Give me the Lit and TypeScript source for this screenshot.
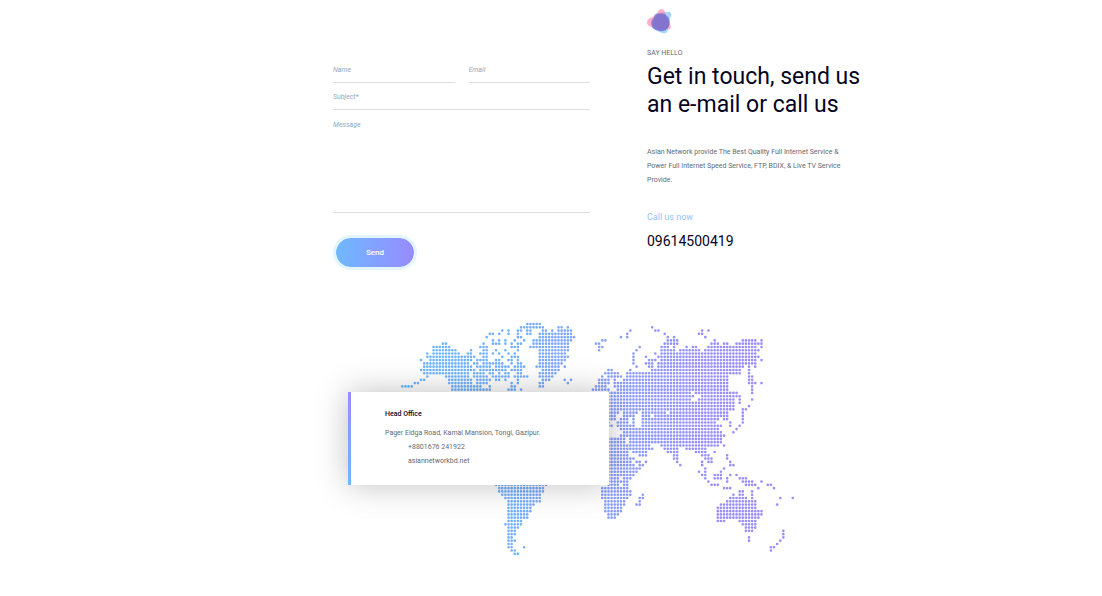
import { LitElement, html, css, svg } from "lit";
import { customElement } from "lit/decorators.js";

const PITCH_X = 9.37;
const PITCH_Y = 9.85;
const ORIGIN_X = 22;
const ORIGIN_Y = 27;

// One entry per row of dots: horizontal spans in map units, snapped to the dot grid.
const LAND: string[] = [
  "394-435",
  "375-445 487-497 517 769",
  "319 337 367-377 395-405 440 452 472 487-528 704 779-789 921 938",
  "283-295 311 337 370 395-405 430-528 696 808 911-921",
  "273 372-382 430-537 676 696 817 835 929",
  "293 312 329 356 386 415-528 623-633 815-847 958 1040-1080 1097",
  "143-152 263 293 303-311 329 347 367-377 415-520 600-610 808-847 948-967 985-993 1023-1097",
  "115-162 256-275 350-367 405-520 611-621 732 798-820 835 873 890-905 939-993 1003-1080 1097",
  "115-180 230 265-275 303 329 367 430-515 611 723 798-835 853-911 930-1080 1088",
  "95 115-190 217-228 256-275 293 312 338 356 430-508 713 779 798-1085",
  "95-190 200-238 265-275 319 347-367 430-518 713 752 788-1088",
  "78 105-228 246 256-275 302 311 337-347 367 430-508 713 761-779 798-1080 1097",
  "85-220 238-246 265-293 303-319 347 367-377 430-500 713 752-770 788-1080",
  "85-228 246-283 303-338 356-386 425-490 508 723 761-770 788-1040 1061 1080",
  "78-240 256-300 303-329 347-377 440-495 640-648 704 770-780 795-1038 1061",
  "85-220 240-265 283-293 312 329-338 367-377 430-480 630-665 696-1038 1061",
  "95 152-220 238-275 293-338 356-386 395 430-472 620 640-675 696-1000 1061-1071",
  "78-85 162-230 246-283 302-312 329 370 440-460 508 528 611-640 655 690-995 1061-1071",
  "58-68 162-230 246-275 347 370 435-445 518 620 611-645 655-665 680-995 1061-1080 1097",
  "22-49 168-255 283 347-360 430-445 605-635 655-670 680-995 1071",
  "168-280 338-356 377 595-630 645 665-675 685-995 1071",
  "645-690 700-885 905-1023 1071",
  "645-890 920-1023 1034",
  "645-885 911-1014 1034 1071",
  "645-890 902-1015 1033",
  "645-1015 1061",
  "645-1015 1040-1052",
  "645-665 685-725 745-805 825-995 1040",
  "645-655 685-715 745-765 785-995 1040",
  "645-655 680-697 715 745-965 985-995 1040",
  "645 672-697 715-720 740-960 1003 1040",
  "645-650 665-715 745-975 1003 1033",
  "682-968 1023",
  "690-978 1014",
  "682-985",
  "645-690 705-978",
  "645-690 705-978",
  "645-690 700-762 800-968 985",
  "645-695 705-770 813-850 873-930",
  "645-695 715-755 823-850 900-930 958",
  "645-700 730-755 833-850 920-940 993",
  "645-710 720 833-850 930-950 993",
  "645-710 725-735 752 845 920 938-950 1003",
  "645-720 732-742 855 920 1003-1014",
  "645-730 930 985",
  "645-725 911 930 978",
  "645-715 920-930 958-978 1003 1023",
  "645-672 685-710 930 958-978 993 1033-1050",
  "645-685 697 938 993 1042-1070 1097",
  "303-455 645-672 690-700 945-968 1052-1080 1115-1125",
  "313-445 618-700 985-1005 1088 1136",
  "313-440 618-705 1030-1042 1070",
  "320-435 618-705 742 1014 1033-1042 1070",
  "330-435 618-695 732-742 1003-1050 1070 1153 1193",
  "338-435 628-690 735 993-1080",
  "338-415 628-690 722-735 975-1080 1145",
  "338-408 633-680 968-1080",
  "338-408 633-680 968-1097",
  "338-395 638-670 968-1097",
  "338-400 640-655 968-1088",
  "338-375 968-985 1033-1080",
  "330-375 1042-1080",
  "338-365 1050-1080",
  "338-360 1050-1070 1163",
  "338-360 1163",
  "338-353 1061 1163",
  "338-360 1061 1153",
  "338-350 1145",
  "338-350 386 1126-1136",
  "348-360 1126",
  "358-368",
];

function dotPath(): string {
  const r = 4;
  let d = "";
  LAND.forEach((row, index) => {
    const y = (ORIGIN_Y + index * PITCH_Y).toFixed(1);
    const cols = new Set<number>();
    for (const span of row.split(" ")) {
      const [a, b = a] = span.split("-").map(Number);
      const from = Math.round((a - ORIGIN_X) / PITCH_X);
      const to = Math.round((b - ORIGIN_X) / PITCH_X);
      for (let c = from; c <= to; c++) cols.add(c);
    }
    cols.forEach((c) => {
      const x = (ORIGIN_X + c * PITCH_X - r).toFixed(1);
      d += `M${x} ${y}a${r} ${r} 0 1 1 ${2 * r} 0a${r} ${r} 0 1 1 ${-2 * r} 0`;
    });
  });
  return d;
}

@customElement("world-map")
export class WorldMap extends LitElement {
  static styles = css`
    :host {
      display: block;
    }
    .map {
      display: block;
      width: 100%;
      height: auto;
    }
  `;

  render() {
    return html`<svg class="map" viewBox="0 0 1200 723" role="img" aria-label="World map">
      ${svg`<defs>
        <linearGradient id="tint" gradientUnits="userSpaceOnUse" x1="0" y1="0" x2="1200" y2="0">
          <stop offset="0" stop-color="#6cbaff" />
          <stop offset="0.3" stop-color="#75b0ff" />
          <stop offset="0.55" stop-color="#8b9efc" />
          <stop offset="0.75" stop-color="#9790fb" />
          <stop offset="1" stop-color="#9c8cfc" />
        </linearGradient>
      </defs>
      <path d=${dotPath()} fill="url(#tint)" />`}
    </svg>`;
  }
}

@customElement("app-root")
export class AppRoot extends LitElement {
  static styles = css`
    :host {
      display: block;
      background: #fff;
      color: #5f6b74;
      font-family: Roboto, "Liberation Sans", sans-serif;
      font-size: 7px;
      line-height: 14px;
    }
    .contact {
      display: grid;
      grid-template-columns: 333fr 257fr 57fr 222fr 233fr;
      align-items: start;
    }
    .form {
      grid-column: 2;
      display: grid;
      grid-template-columns: 1fr 1fr;
      column-gap: 14px;
      margin: 0;
      padding-top: 56px;
    }
    .wide {
      grid-column: 1 / -1;
    }
    .input {
      box-sizing: border-box;
      display: block;
      width: 100%;
      height: 27px;
      padding: 2px 0 0;
      border: 0;
      border-bottom: 1px solid #dedede;
      border-radius: 0;
      outline: 0;
      background: transparent;
      color: #0b0b2b;
      font: italic 7px/14px Roboto, sans-serif;
      resize: none;
    }
    .area {
      height: 103px;
      padding-top: 8px;
    }
    .input::placeholder {
      color: #8fa9c0;
      opacity: 1;
    }
    .send {
      justify-self: start;
      width: 84px;
      height: 35px;
      margin-top: 22px;
      padding: 0;
      border: 3px solid #e3f6ff;
      border-radius: 18px;
      background: linear-gradient(90deg, #6eb9ff, #988bff) padding-box;
      color: #fff;
      font: 500 8px/14px Roboto, sans-serif;
    }
    .intro {
      grid-column: 4;
      padding-top: 8px;
    }
    .logo {
      display: block;
      width: 25px;
      height: 26px;
    }
    .eyebrow {
      margin: 12px 0 0;
    }
    .title {
      margin: 3px 0 0;
      color: #05051f;
      font-weight: 400;
      font-size: 23px;
      line-height: 28px;
    }
    .lead {
      max-width: 206px;
      margin: 26px 0 0;
    }
    .call {
      margin: 23px 0 0;
      color: #8fc3fb;
      font-size: 9px;
    }
    .phone {
      display: block;
      margin-top: 7px;
      color: #05051f;
      font-weight: 400;
      font-size: 14px;
      line-height: 20px;
      text-decoration: none;
    }
    .office {
      display: grid;
      grid-template-columns: 348fr 47fr 214fr 186fr 307fr;
      align-items: start;
      padding: 45px 0 40px;
    }
    .world {
      grid-area: 1 / 3 / 2 / 5;
    }
    .card {
      grid-area: 1 / 2 / 2 / 4;
      box-sizing: border-box;
      margin-top: 77px;
      padding: 15px 8px 17px 34px;
      border-left: 3px solid;
      border-image: linear-gradient(#988bff, #6eb9ff) 1;
      background: #fff;
      box-shadow: 0 0 30px rgba(0, 0, 0, 0.25);
      font-style: normal;
      z-index: 1;
    }
    .name {
      margin: 0 0 5px;
      color: #05051f;
      font-weight: 500;
      font-size: 7px;
      line-height: 14px;
    }
    .line {
      display: block;
      color: inherit;
      text-decoration: none;
    }
    .indent {
      margin-left: 23px;
    }
  `;

  render() {
    return html`
      <section class="contact">
        <form class="form" @submit=${(e: Event) => e.preventDefault()}>
          <input class="input" name="name" aria-label="Name" placeholder="Name" />
          <input class="input" type="email" name="email" aria-label="Email" placeholder="Email" />
          <input class="input wide" name="subject" aria-label="Subject" placeholder="Subject*" />
          <textarea class="input area wide" name="message" aria-label="Message" placeholder="Message"></textarea>
          <button class="send" type="submit">Send</button>
        </form>
        <div class="intro">
          <svg class="logo" viewBox="0 0 25 26" aria-hidden="true">
            <path d="M20 4c3-1 5 1 4 4l-2 5c0 3 0 4-1 8 0 4-3 5-6 4l-7-3c-2-1-3-3-2-5l1-9c0-2 2-3 4-3z" fill="#5db4fb" fill-opacity=".55" />
            <path d="M12 2c2-2 5-1 6 2l1 4 4 8c2 4 0 6-3 5l-6 2-6-3C4 19 0 18 0 14.500c0-3 3-5 5-5l4-3z" fill="#fc6d9c" fill-opacity=".55" />
            <path d="M8.500 7c4-2 8-2 11 .500 4 3.500 4 8 2 11.500-2 4-7 5-11 3.500C5 21 3.500 17 4.500 13z" fill="#5a5fd0" fill-opacity=".65" />
          </svg>
          <p class="eyebrow">SAY HELLO</p>
          <h2 class="title">Get in touch, send us an e-mail or call us</h2>
          <p class="lead">
            Asian Network provide The Best Quality Full Internet Service &amp; Power Full Internet
            Speed Service, FTP, BDIX, &amp; Live TV Service Provide.
          </p>
          <p class="call">Call us now</p>
          <a class="phone" href="tel:09614500419">09614500419</a>
        </div>
      </section>
      <section class="office">
        <world-map class="world"></world-map>
        <address class="card">
          <h3 class="name">Head Office</h3>
          <span class="line">Pager Eidga Road, Kamal Mansion, Tongi, Gazipur.</span>
          <a class="line indent" href="tel:+8801676241922">+8801676 241922</a>
          <a class="line indent" href="https://asiannetworkbd.net">asiannetworkbd.net</a>
        </address>
      </section>
    `;
  }
}
